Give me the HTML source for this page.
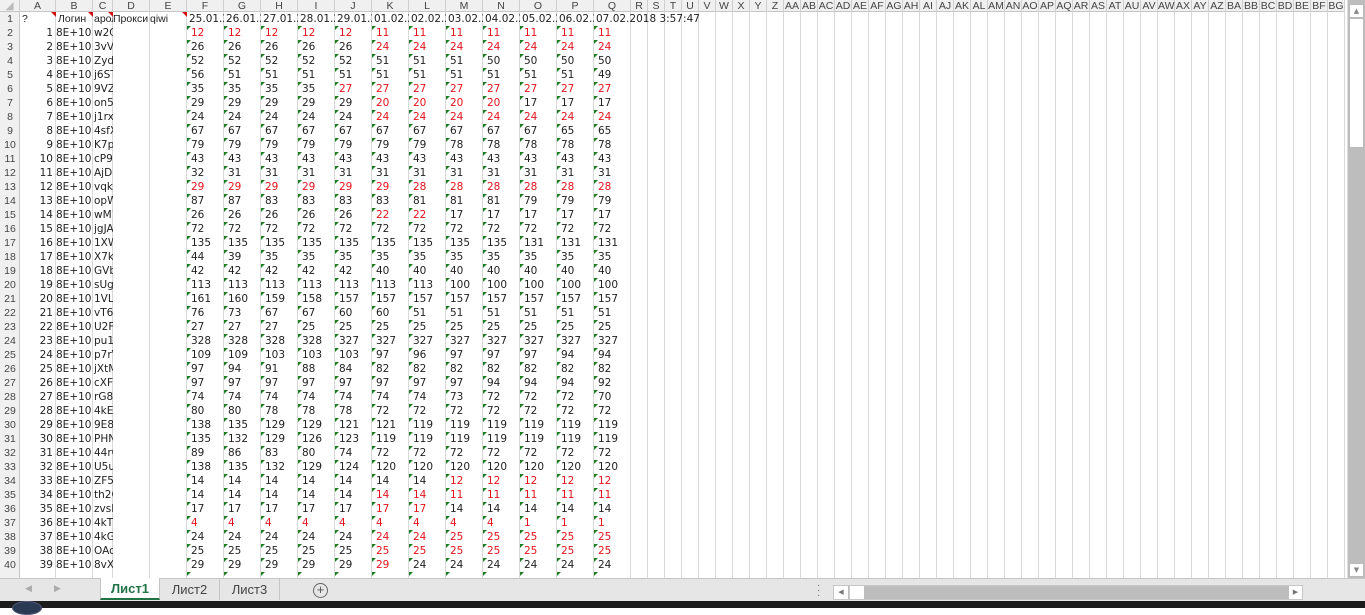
<!DOCTYPE html>
<html><head><meta charset="utf-8"><style>
*{margin:0;padding:0;box-sizing:border-box}
body{width:1365px;height:608px;overflow:hidden;background:#fff;font-family:"DejaVu Sans","Liberation Sans",sans-serif;font-size:10.5px;color:#222;position:relative}
#grid{position:absolute;left:0;top:0;width:1345px;height:578px;background:repeating-linear-gradient(to bottom,transparent 0,transparent 25px,#d8d8d8 25px,#d8d8d8 26px) 0 0/100% 14px;background-position:0 12px;}
#grid2{position:absolute;left:631px;top:0;width:714px;height:578px;background:repeating-linear-gradient(to right,transparent 0,transparent 16px,#d8d8d8 16px,#d8d8d8 17px)}
.vl{position:absolute;top:0;width:1px;height:578px;background:#d8d8d8}
#colhdr{position:absolute;left:0;top:0;width:1345px;height:12px;background:#f0f0f0;border-bottom:1px solid #c6c6c6;font-family:"Liberation Sans",sans-serif}
#rowhdr{position:absolute;left:0;top:0;width:20px;height:578px;background:#f0f0f0;border-right:1px solid #c6c6c6}
.ch{position:absolute;top:0;height:12px;line-height:12px;text-align:center;color:#444;font-size:10.5px;border-right:1px solid #cfcfcf}
.row{position:absolute;left:0;height:14px;line-height:14px;white-space:nowrap}
.row>*{display:inline-block;height:14px;vertical-align:top;overflow:hidden;position:relative;font-style:normal;font-weight:normal}
.row>i:nth-child(1){width:20px;text-align:center;color:#444;font-size:10.5px;font-family:"Liberation Sans",sans-serif}
.row>i:nth-child(2){width:36px;text-align:right;padding-right:3px}
.row>i:nth-child(3){width:37px;text-align:right;padding-right:2px}
.row>i:nth-child(4){width:20px;padding-left:1px}
.row>i:nth-child(5),.row>i:nth-child(6){width:37px}
.row>b{width:37px;padding-left:4px}
.row>b:before{content:"";position:absolute;left:0;top:0;border-top:4px solid #1c7c20;border-right:4px solid transparent}
.row>b.r{color:#e4141c}
.r1>i:nth-child(2),.r1>i:nth-child(3){text-align:left;padding-left:2px}
.r1>i{font-family:"Liberation Sans",sans-serif;font-size:10.5px}
.tri:after{content:"";position:absolute;right:0;top:0;border-top:5px solid #d01010;border-left:5px solid transparent}
.r1>b:before{display:none}
.r1>b{padding-left:2px}
#vs{position:absolute;left:1347px;top:0;width:18px;height:578px;background:#bdbdbd;border-left:1px solid #ddd}
#tabbar{position:absolute;left:0;top:578px;width:1365px;height:23px;background:#e6e6e6;border-top:1px solid #c6c6c6;font-family:"Liberation Sans",sans-serif}
#task{position:absolute;left:0;top:601px;width:1365px;height:7px;background:#1c1c1c}
</style></head><body>
<div id="grid"></div>
<div id="grid2"></div>
<div class="vl" style="left:55px"></div><div class="vl" style="left:92px"></div><div class="vl" style="left:112px"></div><div class="vl" style="left:149px"></div><div class="vl" style="left:186px"></div><div class="vl" style="left:223px"></div><div class="vl" style="left:260px"></div><div class="vl" style="left:297px"></div><div class="vl" style="left:334px"></div><div class="vl" style="left:371px"></div><div class="vl" style="left:408px"></div><div class="vl" style="left:445px"></div><div class="vl" style="left:482px"></div><div class="vl" style="left:519px"></div><div class="vl" style="left:556px"></div><div class="vl" style="left:593px"></div><div class="vl" style="left:630px"></div>
<div id="rowhdr"></div>
<div id="colhdr">
<div class="ch" style="left:0;width:20px;color:#bbb">◢</div>
<div class="ch" style="left:20px;width:36px">A</div><div class="ch" style="left:56px;width:37px">B</div><div class="ch" style="left:93px;width:20px">C</div><div class="ch" style="left:113px;width:37px">D</div><div class="ch" style="left:150px;width:37px">E</div><div class="ch" style="left:187px;width:37px">F</div><div class="ch" style="left:224px;width:37px">G</div><div class="ch" style="left:261px;width:37px">H</div><div class="ch" style="left:298px;width:37px">I</div><div class="ch" style="left:335px;width:37px">J</div><div class="ch" style="left:372px;width:37px">K</div><div class="ch" style="left:409px;width:37px">L</div><div class="ch" style="left:446px;width:37px">M</div><div class="ch" style="left:483px;width:37px">N</div><div class="ch" style="left:520px;width:37px">O</div><div class="ch" style="left:557px;width:37px">P</div><div class="ch" style="left:594px;width:37px">Q</div>
<div style="position:absolute;left:631px;top:0;display:flex;font-size:9.5px;line-height:12px;color:#444">
<span class="ch" style="position:static;width:17px">R</span><span class="ch" style="position:static;width:17px">S</span><span class="ch" style="position:static;width:17px">T</span><span class="ch" style="position:static;width:17px">U</span><span class="ch" style="position:static;width:17px">V</span><span class="ch" style="position:static;width:17px">W</span><span class="ch" style="position:static;width:17px">X</span><span class="ch" style="position:static;width:17px">Y</span><span class="ch" style="position:static;width:17px">Z</span><span class="ch" style="position:static;width:17px">AA</span><span class="ch" style="position:static;width:17px">AB</span><span class="ch" style="position:static;width:17px">AC</span><span class="ch" style="position:static;width:17px">AD</span><span class="ch" style="position:static;width:17px">AE</span><span class="ch" style="position:static;width:17px">AF</span><span class="ch" style="position:static;width:17px">AG</span><span class="ch" style="position:static;width:17px">AH</span><span class="ch" style="position:static;width:17px">AI</span><span class="ch" style="position:static;width:17px">AJ</span><span class="ch" style="position:static;width:17px">AK</span><span class="ch" style="position:static;width:17px">AL</span><span class="ch" style="position:static;width:17px">AM</span><span class="ch" style="position:static;width:17px">AN</span><span class="ch" style="position:static;width:17px">AO</span><span class="ch" style="position:static;width:17px">AP</span><span class="ch" style="position:static;width:17px">AQ</span><span class="ch" style="position:static;width:17px">AR</span><span class="ch" style="position:static;width:17px">AS</span><span class="ch" style="position:static;width:17px">AT</span><span class="ch" style="position:static;width:17px">AU</span><span class="ch" style="position:static;width:17px">AV</span><span class="ch" style="position:static;width:17px">AW</span><span class="ch" style="position:static;width:17px">AX</span><span class="ch" style="position:static;width:17px">AY</span><span class="ch" style="position:static;width:17px">AZ</span><span class="ch" style="position:static;width:17px">BA</span><span class="ch" style="position:static;width:17px">BB</span><span class="ch" style="position:static;width:17px">BC</span><span class="ch" style="position:static;width:17px">BD</span><span class="ch" style="position:static;width:17px">BE</span><span class="ch" style="position:static;width:17px">BF</span><span class="ch" style="position:static;width:17px">BG</span>
</div></div>

<div class="row r1" style="top:12px"><i>1</i><i class="tri">?</i><i class="tri">Логин</i><i class="tri">арол</i><i>Прокси</i><i class="tri">qiwi</i><b>25.01.20</b><b>26.01.20</b><b>27.01.20</b><b>28.01.20</b><b>29.01.20</b><b>01.02.20</b><b>02.02.20</b><b>03.02.20</b><b>04.02.20</b><b>05.02.20</b><b>06.02.20</b><b style="overflow:visible">07.02.2018 3:57:47</b></div>
<div class="row" style="top:26px"><i>2</i><i>1</i><i>8E+10</i><i>w2CG</i><i></i><i></i><b class="r">12</b><b class="r">12</b><b class="r">12</b><b class="r">12</b><b class="r">12</b><b class="r">11</b><b class="r">11</b><b class="r">11</b><b class="r">11</b><b class="r">11</b><b class="r">11</b><b class="r">11</b></div>
<div class="row" style="top:40px"><i>3</i><i>2</i><i>8E+10</i><i>3vVr</i><i></i><i></i><b>26</b><b>26</b><b>26</b><b>26</b><b>26</b><b class="r">24</b><b class="r">24</b><b class="r">24</b><b class="r">24</b><b class="r">24</b><b class="r">24</b><b class="r">24</b></div>
<div class="row" style="top:54px"><i>4</i><i>3</i><i>8E+10</i><i>Zyd2</i><i></i><i></i><b>52</b><b>52</b><b>52</b><b>52</b><b>52</b><b>51</b><b>51</b><b>51</b><b>50</b><b>50</b><b>50</b><b>50</b></div>
<div class="row" style="top:68px"><i>5</i><i>4</i><i>8E+10</i><i>j6ST</i><i></i><i></i><b>56</b><b>51</b><b>51</b><b>51</b><b>51</b><b>51</b><b>51</b><b>51</b><b>51</b><b>51</b><b>51</b><b>49</b></div>
<div class="row" style="top:82px"><i>6</i><i>5</i><i>8E+10</i><i>9VZv</i><i></i><i></i><b>35</b><b>35</b><b>35</b><b>35</b><b class="r">27</b><b class="r">27</b><b class="r">27</b><b class="r">27</b><b class="r">27</b><b class="r">27</b><b class="r">27</b><b class="r">27</b></div>
<div class="row" style="top:96px"><i>7</i><i>6</i><i>8E+10</i><i>on57</i><i></i><i></i><b>29</b><b>29</b><b>29</b><b>29</b><b>29</b><b class="r">20</b><b class="r">20</b><b class="r">20</b><b class="r">20</b><b>17</b><b>17</b><b>17</b></div>
<div class="row" style="top:110px"><i>8</i><i>7</i><i>8E+10</i><i>j1rx9</i><i></i><i></i><b>24</b><b>24</b><b>24</b><b>24</b><b>24</b><b class="r">24</b><b class="r">24</b><b class="r">24</b><b class="r">24</b><b class="r">24</b><b class="r">24</b><b class="r">24</b></div>
<div class="row" style="top:124px"><i>9</i><i>8</i><i>8E+10</i><i>4sfX</i><i></i><i></i><b>67</b><b>67</b><b>67</b><b>67</b><b>67</b><b>67</b><b>67</b><b>67</b><b>67</b><b>67</b><b>65</b><b>65</b></div>
<div class="row" style="top:138px"><i>10</i><i>9</i><i>8E+10</i><i>K7pv</i><i></i><i></i><b>79</b><b>79</b><b>79</b><b>79</b><b>79</b><b>79</b><b>79</b><b>78</b><b>78</b><b>78</b><b>78</b><b>78</b></div>
<div class="row" style="top:152px"><i>11</i><i>10</i><i>8E+10</i><i>cP9P</i><i></i><i></i><b>43</b><b>43</b><b>43</b><b>43</b><b>43</b><b>43</b><b>43</b><b>43</b><b>43</b><b>43</b><b>43</b><b>43</b></div>
<div class="row" style="top:166px"><i>12</i><i>11</i><i>8E+10</i><i>AjDn</i><i></i><i></i><b>32</b><b>31</b><b>31</b><b>31</b><b>31</b><b>31</b><b>31</b><b>31</b><b>31</b><b>31</b><b>31</b><b>31</b></div>
<div class="row" style="top:180px"><i>13</i><i>12</i><i>8E+10</i><i>vqkn</i><i></i><i></i><b class="r">29</b><b class="r">29</b><b class="r">29</b><b class="r">29</b><b class="r">29</b><b class="r">29</b><b class="r">28</b><b class="r">28</b><b class="r">28</b><b class="r">28</b><b class="r">28</b><b class="r">28</b></div>
<div class="row" style="top:194px"><i>14</i><i>13</i><i>8E+10</i><i>opWa</i><i></i><i></i><b>87</b><b>87</b><b>83</b><b>83</b><b>83</b><b>83</b><b>81</b><b>81</b><b>81</b><b>79</b><b>79</b><b>79</b></div>
<div class="row" style="top:208px"><i>15</i><i>14</i><i>8E+10</i><i>wM1</i><i></i><i></i><b>26</b><b>26</b><b>26</b><b>26</b><b>26</b><b class="r">22</b><b class="r">22</b><b>17</b><b>17</b><b>17</b><b>17</b><b>17</b></div>
<div class="row" style="top:222px"><i>16</i><i>15</i><i>8E+10</i><i>jgJA</i><i></i><i></i><b>72</b><b>72</b><b>72</b><b>72</b><b>72</b><b>72</b><b>72</b><b>72</b><b>72</b><b>72</b><b>72</b><b>72</b></div>
<div class="row" style="top:236px"><i>17</i><i>16</i><i>8E+10</i><i>1XWV</i><i></i><i></i><b>135</b><b>135</b><b>135</b><b>135</b><b>135</b><b>135</b><b>135</b><b>135</b><b>135</b><b>131</b><b>131</b><b>131</b></div>
<div class="row" style="top:250px"><i>18</i><i>17</i><i>8E+10</i><i>X7k8</i><i></i><i></i><b>44</b><b>39</b><b>35</b><b>35</b><b>35</b><b>35</b><b>35</b><b>35</b><b>35</b><b>35</b><b>35</b><b>35</b></div>
<div class="row" style="top:264px"><i>19</i><i>18</i><i>8E+10</i><i>GVbi</i><i></i><i></i><b>42</b><b>42</b><b>42</b><b>42</b><b>42</b><b>40</b><b>40</b><b>40</b><b>40</b><b>40</b><b>40</b><b>40</b></div>
<div class="row" style="top:278px"><i>20</i><i>19</i><i>8E+10</i><i>sUg1</i><i></i><i></i><b>113</b><b>113</b><b>113</b><b>113</b><b>113</b><b>113</b><b>113</b><b>100</b><b>100</b><b>100</b><b>100</b><b>100</b></div>
<div class="row" style="top:292px"><i>21</i><i>20</i><i>8E+10</i><i>1VLj</i><i></i><i></i><b>161</b><b>160</b><b>159</b><b>158</b><b>157</b><b>157</b><b>157</b><b>157</b><b>157</b><b>157</b><b>157</b><b>157</b></div>
<div class="row" style="top:306px"><i>22</i><i>21</i><i>8E+10</i><i>vT62</i><i></i><i></i><b>76</b><b>73</b><b>67</b><b>67</b><b>60</b><b>60</b><b>51</b><b>51</b><b>51</b><b>51</b><b>51</b><b>51</b></div>
<div class="row" style="top:320px"><i>23</i><i>22</i><i>8E+10</i><i>U2F9</i><i></i><i></i><b>27</b><b>27</b><b>27</b><b>25</b><b>25</b><b>25</b><b>25</b><b>25</b><b>25</b><b>25</b><b>25</b><b>25</b></div>
<div class="row" style="top:334px"><i>24</i><i>23</i><i>8E+10</i><i>pu1h</i><i></i><i></i><b>328</b><b>328</b><b>328</b><b>328</b><b>327</b><b>327</b><b>327</b><b>327</b><b>327</b><b>327</b><b>327</b><b>327</b></div>
<div class="row" style="top:348px"><i>25</i><i>24</i><i>8E+10</i><i>p7rV</i><i></i><i></i><b>109</b><b>109</b><b>103</b><b>103</b><b>103</b><b>97</b><b>96</b><b>97</b><b>97</b><b>97</b><b>94</b><b>94</b></div>
<div class="row" style="top:362px"><i>26</i><i>25</i><i>8E+10</i><i>jXtM</i><i></i><i></i><b>97</b><b>94</b><b>91</b><b>88</b><b>84</b><b>82</b><b>82</b><b>82</b><b>82</b><b>82</b><b>82</b><b>82</b></div>
<div class="row" style="top:376px"><i>27</i><i>26</i><i>8E+10</i><i>cXFv</i><i></i><i></i><b>97</b><b>97</b><b>97</b><b>97</b><b>97</b><b>97</b><b>97</b><b>97</b><b>94</b><b>94</b><b>94</b><b>92</b></div>
<div class="row" style="top:390px"><i>28</i><i>27</i><i>8E+10</i><i>rG8m</i><i></i><i></i><b>74</b><b>74</b><b>74</b><b>74</b><b>74</b><b>74</b><b>74</b><b>73</b><b>72</b><b>72</b><b>72</b><b>70</b></div>
<div class="row" style="top:404px"><i>29</i><i>28</i><i>8E+10</i><i>4kEd</i><i></i><i></i><b>80</b><b>80</b><b>78</b><b>78</b><b>78</b><b>72</b><b>72</b><b>72</b><b>72</b><b>72</b><b>72</b><b>72</b></div>
<div class="row" style="top:418px"><i>30</i><i>29</i><i>8E+10</i><i>9E8u</i><i></i><i></i><b>138</b><b>135</b><b>129</b><b>129</b><b>121</b><b>121</b><b>119</b><b>119</b><b>119</b><b>119</b><b>119</b><b>119</b></div>
<div class="row" style="top:432px"><i>31</i><i>30</i><i>8E+10</i><i>PHNH</i><i></i><i></i><b>135</b><b>132</b><b>129</b><b>126</b><b>123</b><b>119</b><b>119</b><b>119</b><b>119</b><b>119</b><b>119</b><b>119</b></div>
<div class="row" style="top:446px"><i>32</i><i>31</i><i>8E+10</i><i>44rG</i><i></i><i></i><b>89</b><b>86</b><b>83</b><b>80</b><b>74</b><b>72</b><b>72</b><b>72</b><b>72</b><b>72</b><b>72</b><b>72</b></div>
<div class="row" style="top:460px"><i>33</i><i>32</i><i>8E+10</i><i>U5uZ</i><i></i><i></i><b>138</b><b>135</b><b>132</b><b>129</b><b>124</b><b>120</b><b>120</b><b>120</b><b>120</b><b>120</b><b>120</b><b>120</b></div>
<div class="row" style="top:474px"><i>34</i><i>33</i><i>8E+10</i><i>ZF5u</i><i></i><i></i><b>14</b><b>14</b><b>14</b><b>14</b><b>14</b><b>14</b><b>14</b><b class="r">12</b><b class="r">12</b><b class="r">12</b><b class="r">12</b><b class="r">12</b></div>
<div class="row" style="top:488px"><i>35</i><i>34</i><i>8E+10</i><i>th2C</i><i></i><i></i><b>14</b><b>14</b><b>14</b><b>14</b><b>14</b><b class="r">14</b><b class="r">14</b><b class="r">11</b><b class="r">11</b><b class="r">11</b><b class="r">11</b><b class="r">11</b></div>
<div class="row" style="top:502px"><i>36</i><i>35</i><i>8E+10</i><i>zvsD</i><i></i><i></i><b>17</b><b>17</b><b>17</b><b>17</b><b>17</b><b class="r">17</b><b class="r">17</b><b>14</b><b>14</b><b>14</b><b>14</b><b>14</b></div>
<div class="row" style="top:516px"><i>37</i><i>36</i><i>8E+10</i><i>4kTE</i><i></i><i></i><b class="r">4</b><b class="r">4</b><b class="r">4</b><b class="r">4</b><b class="r">4</b><b class="r">4</b><b class="r">4</b><b class="r">4</b><b class="r">4</b><b class="r">1</b><b class="r">1</b><b class="r">1</b></div>
<div class="row" style="top:530px"><i>38</i><i>37</i><i>8E+10</i><i>4kGE</i><i></i><i></i><b>24</b><b>24</b><b>24</b><b>24</b><b>24</b><b class="r">24</b><b class="r">24</b><b class="r">25</b><b class="r">25</b><b class="r">25</b><b class="r">25</b><b class="r">25</b></div>
<div class="row" style="top:544px"><i>39</i><i>38</i><i>8E+10</i><i>OAci</i><i></i><i></i><b>25</b><b>25</b><b>25</b><b>25</b><b>25</b><b class="r">25</b><b class="r">25</b><b class="r">25</b><b class="r">25</b><b class="r">25</b><b class="r">25</b><b class="r">25</b></div>
<div class="row" style="top:558px"><i>40</i><i>39</i><i>8E+10</i><i>8vXu</i><i></i><i></i><b>29</b><b>29</b><b>29</b><b>29</b><b>29</b><b class="r">29</b><b>24</b><b>24</b><b>24</b><b>24</b><b>24</b><b>24</b></div>
<div class="row" style="top:572px;height:6px;overflow:hidden"><i></i><i></i><i></i><i></i><i></i><i></i><b></b><b></b><b></b><b></b><b></b><b></b><b></b><b></b><b></b><b></b><b></b><b></b></div>

<div id="vs">
<div style="position:absolute;left:1px;top:4px;width:15px;height:14px;background:#fff;border:1px solid #bbb;color:#888;font-size:7px;text-align:center;line-height:12px">▲</div>
<div style="position:absolute;left:1px;top:18px;width:15px;height:130px;background:#fff;border:1px solid #bbb"></div>
<div style="position:absolute;left:1px;top:563px;width:15px;height:14px;background:#fff;border:1px solid #bbb;color:#888;font-size:7px;text-align:center;line-height:12px">▼</div>
</div>

<div id="tabbar">
<div style="position:absolute;left:25px;top:4px;color:#aaa;font-size:9px">◀</div>
<div style="position:absolute;left:54px;top:4px;color:#aaa;font-size:9px">▶</div>
<div style="position:absolute;left:100px;top:-1px;width:60px;height:22px;background:#fff;border-bottom:2px solid #217346;border-left:1px solid #c6c6c6;border-right:1px solid #c6c6c6;color:#217346;font-weight:bold;font-size:13px;text-align:center;line-height:21px">Лист1</div>
<div style="position:absolute;left:160px;top:0;width:60px;height:21px;color:#444;font-size:13px;text-align:center;line-height:21px;border-right:1px solid #c6c6c6">Лист2</div>
<div style="position:absolute;left:220px;top:0;width:60px;height:21px;color:#444;font-size:13px;text-align:center;line-height:21px;border-right:1px solid #c6c6c6">Лист3</div>
<div style="position:absolute;left:313px;top:4px;width:15px;height:15px;border:1.5px solid #666;border-radius:50%;color:#555;font-size:13px;line-height:12px;text-align:center">+</div>
<div style="position:absolute;left:817px;top:4px;color:#666;font-size:10px;line-height:5px">·<br>·<br>·</div>
<div style="position:absolute;left:833px;top:6px;width:470px;height:15px;background:#bdbdbd;border:1px solid #c6c6c6">
<div style="position:absolute;left:0;top:0;width:14px;height:13px;background:#fff;color:#777;font-size:7px;line-height:13px;text-align:center">◀</div>
<div style="position:absolute;left:15px;top:0;width:15px;height:13px;background:#fff;border-left:1px solid #ccc"></div>
<div style="position:absolute;right:0;top:0;width:13px;height:13px;background:#fff;color:#777;font-size:7px;line-height:13px;text-align:center">▶</div>
</div>
</div>
<div id="task"><div style="position:absolute;left:12px;top:0;width:30px;height:14px;border:1px solid #557;border-radius:50%;background:#2a3a55"></div></div>
</body></html>
